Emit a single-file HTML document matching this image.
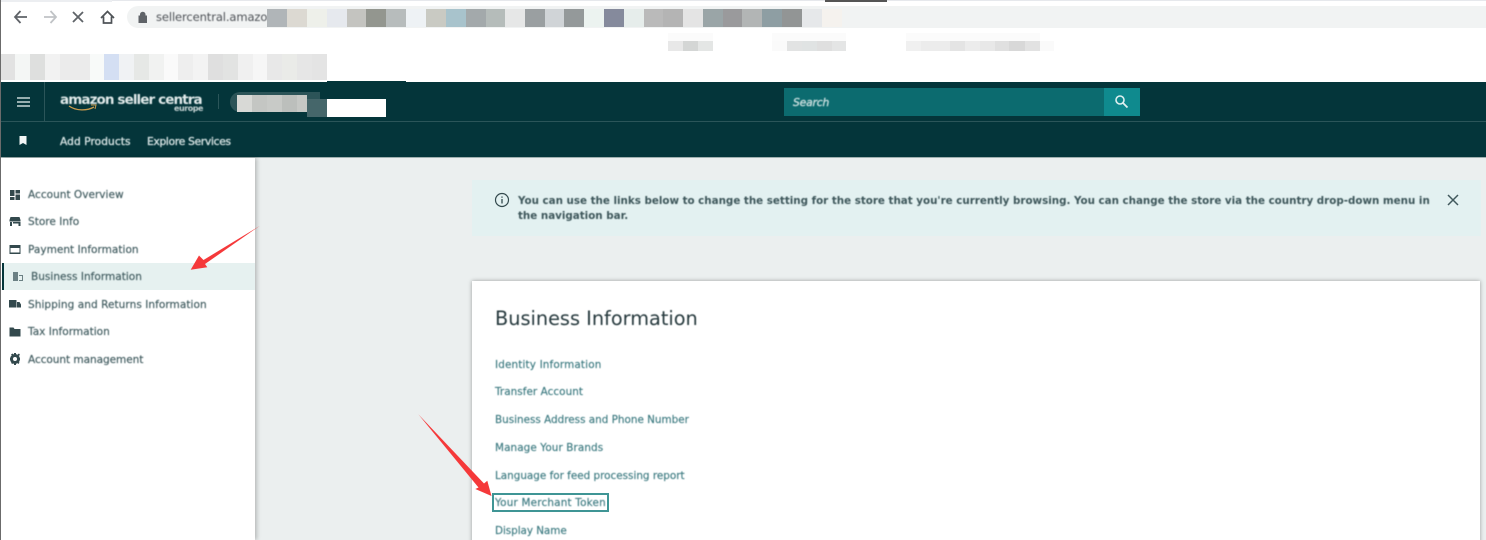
<!DOCTYPE html>
<html><head><meta charset="utf-8">
<style>
html,body{margin:0;padding:0;background:#fff}
#p{position:relative;width:1486px;height:540px;overflow:hidden;background:#fff;font-family:"DejaVu Sans","Liberation Sans",sans-serif}
#p div,#p span.t,#p svg{position:absolute}
.t{white-space:nowrap;line-height:14px;filter:blur(.45px)}
.n{font-size:10.55px;color:#3f5a5e;left:28px;-webkit-text-stroke:.15px #3f5a5e}
.l{font-size:10.4px;color:#3c7a80;left:495px;-webkit-text-stroke:.15px #3c7a80}
.h{font-size:10.6px;color:#d5e2e2;-webkit-text-stroke:.35px #d5e2e2;filter:blur(.45px)}
.b{font:bold 10.32px/14px 'DejaVu Sans',sans-serif;color:#3d565a;left:518px}
</style></head><body>
<div id="p">
<!-- browser -->
<div style="left:127px;top:6px;width:1359px;height:22px;background:#f1f3f3;border-radius:11px 0 0 11px"></div>
<div style="left:0;top:0;width:112px;height:2px;background:#eceef1"></div>
<div style="left:112px;top:0;width:1374px;height:1px;background:#e6e8ec"></div>
<div style="left:825px;top:0;width:62px;height:2px;background:#555"></div>
<svg style="left:10px;top:6px" width="130" height="22" viewBox="0 0 130 22" fill="none">
<path d="M5 11h12M10.5 5L5 11l5.500 6" stroke="#5f6368" stroke-width="1.800"/>
<path d="M34 11h12M40.500 5L46 11l-5.500 6" stroke="#c0c3c6" stroke-width="1.800"/>
<path d="M63 6l10 10M73 6L63 16" stroke="#5f6368" stroke-width="1.800"/>
<path d="M91 12l6.500-6.500L104 12M93.500 10.500V17h8v-6.500" stroke="#4f5357" stroke-width="1.700"/>
</svg>
<svg style="left:137px;top:10px" width="12" height="14" viewBox="0 0 12 14"><path d="M2 6h7.500v6.500H2zM3.500 6V4.500a2.250 2.250 0 014.500 0V6" fill="#5f6368" stroke="#5f6368"/></svg>
<span class="t" style="left:156px;top:10px;font:11.500px/14px 'DejaVu Sans',sans-serif;color:#4d5156;letter-spacing:-.1px">sellercentral.amazo</span>
<!-- pixel row 1 -->
<div style="left:267px;top:9px;width:20px;height:18px;background:#b0b5b8"></div>
<div style="left:287px;top:9px;width:20px;height:18px;background:#dcd9d2"></div>
<div style="left:307px;top:9px;width:20px;height:18px;background:#eef0ea"></div>
<div style="left:327px;top:9px;width:20px;height:18px;background:#e6e9ee"></div>
<div style="left:347px;top:9px;width:20px;height:18px;background:#c4c4c0"></div>
<div style="left:366px;top:9px;width:20px;height:18px;background:#93968f"></div>
<div style="left:386px;top:9px;width:20px;height:18px;background:#b7bcbc"></div>
<div style="left:406px;top:9px;width:20px;height:18px;background:#eef2f5"></div>
<div style="left:426px;top:9px;width:20px;height:18px;background:#c9cac3"></div>
<div style="left:446px;top:9px;width:20px;height:18px;background:#a8c3cc"></div>
<div style="left:466px;top:9px;width:20px;height:18px;background:#a3a9ab"></div>
<div style="left:486px;top:9px;width:20px;height:18px;background:#b5bcba"></div>
<div style="left:505px;top:9px;width:20px;height:18px;background:#e6e7e7"></div>
<div style="left:525px;top:9px;width:20px;height:18px;background:#9a9fa1"></div>
<div style="left:545px;top:9px;width:19px;height:18px;background:#d0d4d7"></div>
<div style="left:564px;top:9px;width:20px;height:18px;background:#94999a"></div>
<div style="left:584px;top:9px;width:20px;height:18px;background:#ecf3f0"></div>
<div style="left:604px;top:9px;width:20px;height:18px;background:#858a9c"></div>
<div style="left:624px;top:9px;width:20px;height:18px;background:#e6edeb"></div>
<div style="left:644px;top:9px;width:19px;height:18px;background:#bababa"></div>
<div style="left:663px;top:9px;width:20px;height:18px;background:#b4b4b4"></div>
<div style="left:683px;top:9px;width:20px;height:18px;background:#e4e4e4"></div>
<div style="left:703px;top:9px;width:20px;height:18px;background:#9aa5a7"></div>
<div style="left:723px;top:9px;width:19px;height:18px;background:#9a9a9c"></div>
<div style="left:742px;top:9px;width:20px;height:18px;background:#b2b5b5"></div>
<div style="left:762px;top:9px;width:20px;height:18px;background:#8e9ea3"></div>
<div style="left:782px;top:9px;width:20px;height:18px;background:#929595"></div>
<div style="left:802px;top:9px;width:20px;height:18px;background:#e6e8ea"></div>
<div style="left:822px;top:9px;width:20px;height:18px;background:#f5f2ee"></div>
<!-- pixel row right -->
<div style="left:668px;top:33px;width:45px;height:8px;background:#fbfbfb"></div>
<div style="left:772px;top:33px;width:74px;height:8px;background:#fbfbfb"></div>
<div style="left:906px;top:33px;width:134px;height:8px;background:#fbfbfb"></div>
<div style="left:668px;top:41px;width:15px;height:10px;background:#e8e8e8"></div>
<div style="left:683px;top:41px;width:15px;height:10px;background:#d4d6d5"></div>
<div style="left:698px;top:41px;width:15px;height:10px;background:#e4e6e5"></div>
<div style="left:772px;top:41px;width:15px;height:10px;background:#fafafa"></div>
<div style="left:787px;top:41px;width:15px;height:10px;background:#e2e3e3"></div>
<div style="left:802px;top:41px;width:15px;height:10px;background:#e0e3e3"></div>
<div style="left:817px;top:41px;width:15px;height:10px;background:#dfdfdf"></div>
<div style="left:832px;top:41px;width:14px;height:10px;background:#e4e5e5"></div>
<div style="left:906px;top:41px;width:15px;height:10px;background:#f0f0f0"></div>
<div style="left:921px;top:41px;width:29px;height:10px;background:#ececec"></div>
<div style="left:950px;top:41px;width:15px;height:10px;background:#e4e4e4"></div>
<div style="left:965px;top:41px;width:15px;height:10px;background:#ececec"></div>
<div style="left:980px;top:41px;width:15px;height:10px;background:#e8e8e8"></div>
<div style="left:995px;top:41px;width:14px;height:10px;background:#e0e0e0"></div>
<div style="left:1009px;top:41px;width:16px;height:10px;background:#d8d8d8"></div>
<div style="left:1025px;top:41px;width:15px;height:10px;background:#e2e2e2"></div>
<div style="left:1040px;top:41px;width:14px;height:10px;background:#fafafa"></div>
<!-- pixel row 2 -->
<div style="left:0;top:54px;width:15px;height:26px;background:#e2e2e2"></div>
<div style="left:15px;top:54px;width:15px;height:26px;background:#f4f6f5"></div>
<div style="left:30px;top:54px;width:15px;height:26px;background:#dedfde"></div>
<div style="left:45px;top:54px;width:15px;height:26px;background:#f2f2f2"></div>
<div style="left:60px;top:54px;width:30px;height:26px;background:#ebebeb"></div>
<div style="left:90px;top:54px;width:14px;height:26px;background:#f8faf9"></div>
<div style="left:104px;top:54px;width:15px;height:26px;background:#d4dff3"></div>
<div style="left:119px;top:54px;width:15px;height:26px;background:#f0f2f4"></div>
<div style="left:134px;top:54px;width:15px;height:26px;background:#e6e8e6"></div>
<div style="left:149px;top:54px;width:15px;height:26px;background:#f1f2f1"></div>
<div style="left:164px;top:54px;width:14px;height:26px;background:#fafafa"></div>
<div style="left:178px;top:54px;width:15px;height:26px;background:#eeeeee"></div>
<div style="left:193px;top:54px;width:15px;height:26px;background:#f3f3f3"></div>
<div style="left:208px;top:54px;width:15px;height:26px;background:#dfdfdf"></div>
<div style="left:223px;top:54px;width:15px;height:26px;background:#e2e3e2"></div>
<div style="left:238px;top:54px;width:15px;height:26px;background:#f0f0f0"></div>
<div style="left:253px;top:54px;width:14px;height:26px;background:#f6f6f6"></div>
<div style="left:267px;top:54px;width:15px;height:26px;background:#e8e8e8"></div>
<div style="left:282px;top:54px;width:15px;height:26px;background:#eaebe8"></div>
<div style="left:297px;top:54px;width:15px;height:26px;background:#e6e6e6"></div>
<div style="left:312px;top:54px;width:15px;height:26px;background:#e4e4e4"></div>
<!-- header -->
<div style="left:1px;top:82px;width:1485px;height:75px;background:#04353a"></div>
<div style="left:327px;top:81px;width:79px;height:1px;background:#04353a"></div>
<div style="left:1px;top:121px;width:1485px;height:1px;background:#2b5559"></div>
<div style="left:44px;top:82px;width:1px;height:39px;background:#2b5559"></div>
<div style="left:218px;top:94px;width:1px;height:15px;background:#2b5559"></div>
<svg style="left:16px;top:96px" width="15" height="12" viewBox="0 0 15 12"><path d="M1 2h13M1 6h13M1 10h13" stroke="#c7d6d6" stroke-width="1.500"/></svg>
<span class="t" style="left:60px;top:91px;font:bold 13.500px/18px 'DejaVu Sans',sans-serif;color:#e1eaea;letter-spacing:-.9px">amazon seller centra</span>
<span class="t" style="left:174px;top:103px;font:bold 8px/11px 'DejaVu Sans',sans-serif;color:#c9d6d6;letter-spacing:-.45px">europe</span>
<svg style="left:68px;top:104px" width="30" height="9" viewBox="0 0 30 9" fill="none"><path d="M1 2c7 5 18 5 25 1" stroke="#c89a4c" stroke-width="1.300"/><path d="M23 1l5 0-1 4" stroke="#c89a4c"/></svg>
<div style="left:230px;top:92px;width:90px;height:20px;background:#2c5458;border-radius:10px 0 0 10px"></div>
<div style="left:237px;top:95px;width:15px;height:17px;background:#d8d9d6"></div>
<div style="left:252px;top:95px;width:15px;height:17px;background:#c4c6c3"></div>
<div style="left:267px;top:95px;width:15px;height:17px;background:#c8cac7"></div>
<div style="left:282px;top:95px;width:15px;height:17px;background:#bcbfbc"></div>
<div style="left:297px;top:95px;width:10px;height:17px;background:#c6c8c5"></div>
<div style="left:307px;top:99px;width:20px;height:18px;background:#45666a"></div>
<div style="left:327px;top:99px;width:59px;height:18px;background:#fff"></div>
<div style="left:784px;top:88px;width:320px;height:28px;background:#0c6b6f"></div>
<div style="left:1104px;top:88px;width:36px;height:28px;background:#0f8a8e"></div>
<span class="t" style="left:793px;top:96px;font:italic 10.800px/14px 'DejaVu Sans',sans-serif;color:#c5dcdc;-webkit-text-stroke:.4px #c5dcdc;letter-spacing:-.2px">Search</span>
<svg style="left:1114px;top:94px" width="15" height="15" viewBox="0 0 15 15" fill="none"><circle cx="6" cy="6" r="4" stroke="#dff0f0" stroke-width="1.600"/><path d="M9 9l4.500 4.500" stroke="#dff0f0" stroke-width="1.800"/></svg>
<svg style="left:18px;top:135px" width="10" height="11" viewBox="0 0 10 11"><path d="M1.500 1h7v9L5 8l-3.500 2z" fill="#f2f6f6"/></svg>
<span class="t h" style="left:60px;top:135px;letter-spacing:.08px">Add Products</span>
<span class="t h" style="left:147px;top:135px;letter-spacing:-.25px">Explore Services</span>
<!-- main -->
<div style="left:255px;top:157px;width:1231px;height:383px;background:#ebefef"></div>
<div style="left:1px;top:157px;width:1485px;height:1px;background:#9fb0b0"></div>
<div style="left:1px;top:158px;width:254px;height:382px;background:#fff;box-shadow:2px 0 4px rgba(0,0,0,.22)"></div>
<div style="left:3px;top:263px;width:252px;height:27px;background:#e6f1f0"></div>
<div style="left:2px;top:263px;width:2px;height:27px;background:#04353a"></div>
<div style="left:0;top:0;width:1px;height:540px;background:#6b6b6b"></div>
<!-- sidebar icons -->
<svg style="left:9px;top:189px" width="12" height="180" viewBox="0 0 12 180" fill="#33494d">
<path d="M1 1h4.500v6H1zM6.500 1H11v3.500H6.500zM1 8h4.500v3H1zM6.500 5.500H11V11H6.500z"/>
<path d="M1.500 28h9l1 3v1.500H.5V31zM1 33h2v4H1zM4 33h7.500v4H9.500v-2.500H4z"/>
<path d="M.5 56h11v9H.5zM1.500 59v4.500h9V59z" fill-rule="evenodd"/>
<path d="M0 111h7.500v7.500H0zM8 113h2.500l1.500 2.500v3H8z"/>
<path d="M.5 138.500h4l1 1.500h6v7.500H.5z"/>
<path d="M6 165a5 5 0 100 10 5 5 0 000-10zm0 3a2 2 0 110 4 2 2 0 010-4z" fill-rule="evenodd"/>
<path d="M5 164h2v2H5zM5 174h2v2H5zM1 169h2v2H1zM9 169h2v2H9zM2 165.500l1.500-1 1.500 1.500-1.500 1zM8.500 165.500l1.500-1 1 1.500-1.500 1zM2 174l1-1.500 1.500 1-1 1.500zM8 173.500l1-1 1.500 1-1 1.500z"/>
</svg>
<svg style="left:12px;top:271px" width="12" height="11" viewBox="0 0 12 11" fill="#6b8084"><path d="M1 1h5v9H1z"/><path d="M7 4h4v6H7V9h3V5H7z"/></svg>
<span class="t n" style="top:188px">Account Overview</span>
<span class="t n" style="top:215px">Store Info</span>
<span class="t n" style="top:243px">Payment Information</span>
<span class="t n" style="top:270px;left:31px">Business Information</span>
<span class="t n" style="top:298px;letter-spacing:.04px">Shipping and Returns Information</span>
<span class="t n" style="top:325px">Tax Information</span>
<span class="t n" style="top:353px;letter-spacing:-.07px">Account management</span>
<!-- banner -->
<div style="left:472px;top:180px;width:1009px;height:56px;background:#e3f1f1"></div>
<svg style="left:494px;top:192px" width="16" height="16" viewBox="0 0 16 16" fill="none"><circle cx="8" cy="8" r="6.500" stroke="#33494d" stroke-width="1.200"/><path d="M8 7v4.500M8 4.500v1.300" stroke="#33494d" stroke-width="1.300"/></svg>
<span class="t b" style="top:194px">You can use the links below to change the setting for the store that you're currently browsing. You can change the store via the country drop-down menu in</span>
<span class="t b" style="top:209px">the navigation bar.</span>
<svg style="left:1447px;top:194px" width="12" height="12" viewBox="0 0 12 12"><path d="M1 1l10 10M11 1L1 11" stroke="#41595d" stroke-width="1.500"/></svg>
<!-- card -->
<div style="left:472px;top:281px;width:1008px;height:270px;background:#fff;box-shadow:0 0 4px rgba(0,0,0,.35)"></div>
<span class="t" style="left:495px;top:306px;font:19.300px/26px 'DejaVu Sans',sans-serif;color:#26393d">Business Information</span>
<span class="t l" style="top:358px;letter-spacing:.16px">Identity Information</span>
<span class="t l" style="top:385px;letter-spacing:.06px">Transfer Account</span>
<span class="t l" style="top:413px">Business Address and Phone Number</span>
<span class="t l" style="top:441px;letter-spacing:.1px">Manage Your Brands</span>
<span class="t l" style="top:469px">Language for feed processing report</span>
<span class="t l" style="top:496px;letter-spacing:.2px">Your Merchant Token</span>
<span class="t l" style="top:524px;letter-spacing:-.05px">Display Name</span>
<div style="left:492px;top:493px;width:113px;height:15px;border:2px solid #3f9595"></div>
<!-- arrows -->
<svg style="left:0;top:0" width="1486" height="540" viewBox="0 0 1486 540"><path d="M260 225.700L205 264 207.300 267.300 190.700 269.800 199 255.500 203.500 260z" fill="#f5393a"/><path d="M418.300 414.300L484 483.500 487.300 480.700 491.500 496 475.300 489 478.500 487.500z" fill="#f5393a"/></svg>
</div>
</body></html>
